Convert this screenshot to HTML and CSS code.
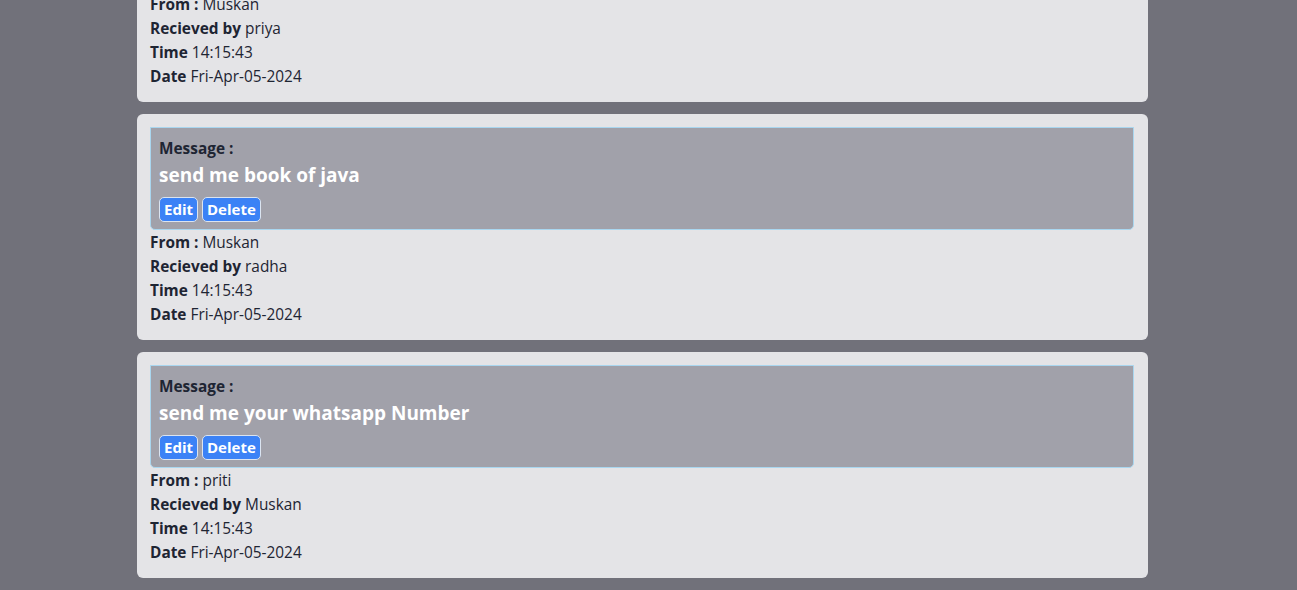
FILE: index.html
```html
<!DOCTYPE html>
<html>
<head>
<meta charset="utf-8">
<link rel="stylesheet" href="styles.css">
</head>
<body>
<main class="list">
  <section class="card">
    <div class="msg">
      <div class="msg-label">Message :</div>
      <div class="msg-text">hello priya</div>
      <div class="actions"><button class="btn">Edit</button><button class="btn">Delete</button></div>
    </div>
    <div class="row"><b>From :</b> Muskan</div>
    <div class="row"><b>Recieved by</b> priya</div>
    <div class="row"><b>Time</b> 14:15:43</div>
    <div class="row"><b>Date</b> Fri-Apr-05-2024</div>
  </section>
  <section class="card">
    <div class="msg">
      <div class="msg-label">Message :</div>
      <div class="msg-text">send me book of java</div>
      <div class="actions"><button class="btn">Edit</button><button class="btn">Delete</button></div>
    </div>
    <div class="row"><b>From :</b> Muskan</div>
    <div class="row"><b>Recieved by</b> radha</div>
    <div class="row"><b>Time</b> 14:15:43</div>
    <div class="row"><b>Date</b> Fri-Apr-05-2024</div>
  </section>
  <section class="card">
    <div class="msg">
      <div class="msg-label">Message :</div>
      <div class="msg-text">send me your whatsapp Number</div>
      <div class="actions"><button class="btn">Edit</button><button class="btn">Delete</button></div>
    </div>
    <div class="row"><b>From :</b> priti</div>
    <div class="row"><b>Recieved by</b> Muskan</div>
    <div class="row"><b>Time</b> 14:15:43</div>
    <div class="row"><b>Date</b> Fri-Apr-05-2024</div>
  </section>
</main>
</body>
</html>
```

FILE: styles.css
```css
html, body {
  margin: 0;
  padding: 0;
  background: #71717a;
  height: 590px;
  overflow: hidden;
}
body {
  font-family: "Open Sans", "Noto Sans", "Liberation Sans", sans-serif;
  font-size: 15.4px;
  line-height: 24px;
  color: #1e2533;
}
.list {
  display: flex;
  flex-direction: column;
  gap: 12px;
  width: 1011px;
  margin: -124px 0 0 137px;
}
.card {
  background: #e4e4e7;
  border-radius: 6px;
  padding: 13px 14px 13px 13px;
  height: 226px;
  box-sizing: border-box;
}
.msg {
  background: #a1a1aa;
  border: 1px solid #a9d6ef;
  border-radius: 0 0 5px 5px;
  padding: 9px 8px 7px 8px;
}
.msg-label {
  font-weight: 700;
  color: #1e2533;
}
.msg-text {
  font-size: 19px;
  font-weight: 700;
  line-height: 29px;
  color: #ffffff;
}
.actions {
  display: flex;
  gap: 4px;
  margin-top: 7px;
}
.btn {
  font-family: inherit;
  font-size: 15px;
  font-weight: 700;
  line-height: 21px;
  color: #ffffff;
  background: #3b82f6;
  border: 1px solid #dbe4f0;
  border-radius: 5px;
  padding: 1px 4px;
  cursor: pointer;
}
.row {
  padding-top: 1px;
  margin-bottom: -1px;
}
.row b {
  font-weight: 700;
}
```
